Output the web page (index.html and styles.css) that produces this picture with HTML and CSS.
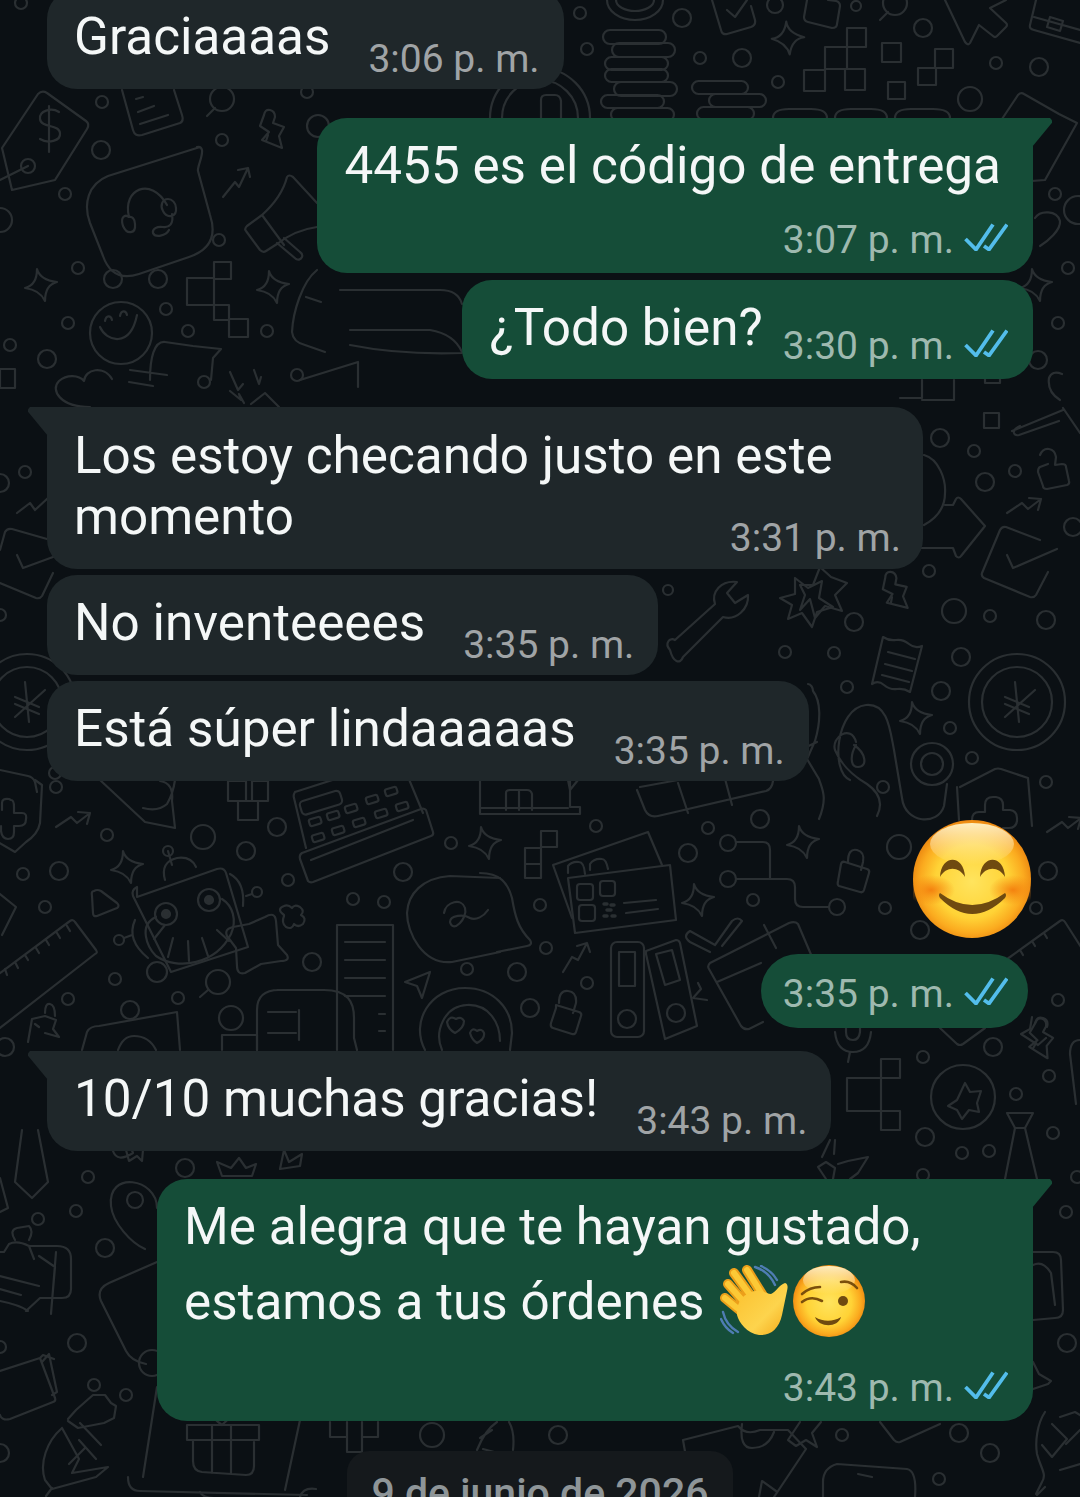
FILE: index.html
```html
<!doctype html>
<html lang="es">
<head>
<meta charset="utf-8">
<title>Chat</title>
<link rel="stylesheet" href="styles.css">
</head>
<body>
<svg width="0" height="0" class="defs">
	<defs>
		<symbol id="checks" viewBox="0 0 44 28"><path d="M1.5 16 12 26.5 29 1.5M20 23l5 3.5L43 1.5"/></symbol>
		<path id="spark" d="M-4-16Q-1-5 16-3 4 0 4 16 -1 5-16 3-4 0-4-16Z"/>
		<g id="plug"><path d="M-4-20q1-6 6-5t5 7l-2 6 11 4-5 9 3 12-20-8 7-8-9-6z"/><path d="M0 0l-2 6"/></g>
		<path id="trend" d="M0 14 15 4l6 6L34 0M22-1l12 1-3 11"/>
		<radialGradient id="face" cx=".5" cy=".52" r=".52"><stop offset="0" stop-color="#ffe45e"/><stop offset=".6" stop-color="#ffd336"/><stop offset=".84" stop-color="#fbab1f"/><stop offset="1" stop-color="#ec8710"/></radialGradient>
		<radialGradient id="cheek"><stop offset="0" stop-color="#f4820f"/><stop offset="1" stop-color="#f58a12" stop-opacity="0"/></radialGradient>
		<linearGradient id="shine" x1="0" y1="0" x2="0" y2="1"><stop offset="0" stop-color="#fff3c8" stop-opacity=".95"/><stop offset="1" stop-color="#fff3c8" stop-opacity="0"/></linearGradient>
		<linearGradient id="palm" x1="0" y1="0" x2="1" y2="1"><stop offset="0" stop-color="#fbc02d"/><stop offset=".6" stop-color="#fdd44d"/><stop offset="1" stop-color="#f4a716"/></linearGradient>
	</defs>
</svg>

<!-- wallpaper doodles -->
<svg class="wall" width="1080" height="1497" viewBox="0 0 1080 1497">
	<g class="dots">
		<circle cx="21" cy="3" r="6"/><circle cx="102" cy="102" r="6"/><circle cx="101" cy="150" r="9"/><circle cx="65" cy="194" r="6"/><circle cx="0" cy="220" r="12"/><circle cx="222" cy="140" r="6"/><circle cx="219" cy="240" r="6"/><circle cx="78" cy="268" r="6"/><circle cx="113" cy="279" r="9"/><circle cx="158" cy="279" r="9"/><circle cx="166" cy="309" r="6"/><circle cx="68" cy="323" r="6"/><circle cx="188" cy="331" r="6"/><circle cx="267" cy="331" r="6"/><circle cx="10" cy="345" r="6"/><circle cx="47" cy="359" r="9"/><circle cx="204" cy="382" r="6"/><circle cx="297" cy="375" r="6"/><circle cx="318" cy="126" r="11"/><circle cx="307" cy="92" r="6"/>
		<circle cx="580" cy="13" r="6"/><circle cx="587" cy="49" r="6"/><circle cx="682" cy="18" r="9"/><circle cx="700" cy="58" r="6"/><circle cx="742" cy="58" r="9"/><circle cx="778" cy="82" r="6"/><circle cx="775" cy="5" r="8"/><circle cx="856" cy="6" r="5"/><circle cx="923" cy="28" r="9"/><circle cx="996" cy="63" r="6"/><circle cx="1039" cy="67" r="9"/><circle cx="970" cy="99" r="12"/>
		<circle cx="1055" cy="194" r="6"/><circle cx="1068" cy="268" r="6"/><circle cx="1058" cy="323" r="6"/><circle cx="1038" cy="360" r="9"/><circle cx="1078" cy="210" r="14"/>
		<circle cx="940" cy="438" r="9"/><circle cx="974" cy="451" r="6"/><circle cx="985" cy="482" r="9"/><circle cx="1015" cy="471" r="6"/><circle cx="1073" cy="527" r="9"/><circle cx="929" cy="571" r="6"/><circle cx="854" cy="622" r="9"/><circle cx="954" cy="611" r="12"/><circle cx="990" cy="616" r="6"/><circle cx="1046" cy="620" r="9"/><circle cx="834" cy="653" r="6"/><circle cx="961" cy="657" r="9"/><circle cx="941" cy="691" r="9"/><circle cx="847" cy="687" r="6"/><circle cx="950" cy="728" r="6"/><circle cx="972" cy="758" r="6"/><circle cx="1046" cy="782" r="6"/><circle cx="883" cy="787" r="6"/>
		<circle cx="25" cy="472" r="6"/><circle cx="0" cy="483" r="9"/><circle cx="0" cy="615" r="6"/><circle cx="55" cy="773" r="6"/><circle cx="56" cy="787" r="6"/>
		<circle cx="785" cy="652" r="6"/><circle cx="668" cy="590" r="5"/>
		<circle cx="107" cy="835" r="6"/><circle cx="203" cy="837" r="12"/><circle cx="277" cy="827" r="9"/><circle cx="246" cy="851" r="9"/><circle cx="59" cy="871" r="9"/><circle cx="23" cy="874" r="6"/><circle cx="45" cy="907" r="6"/><circle cx="288" cy="880" r="6"/><circle cx="403" cy="872" r="9"/><circle cx="451" cy="843" r="6"/><circle cx="353" cy="899" r="6"/><circle cx="384" cy="902" r="6"/><circle cx="312" cy="962" r="9"/><circle cx="467" cy="969" r="6"/><circle cx="115" cy="979" r="6"/><circle cx="68" cy="999" r="6"/><circle cx="178" cy="998" r="6"/><circle cx="130" cy="1010" r="9"/><circle cx="231" cy="1018" r="12"/><circle cx="5" cy="1047" r="9"/>
		<circle cx="596" cy="826" r="6"/><circle cx="540" cy="905" r="6"/><circle cx="546" cy="948" r="6"/><circle cx="517" cy="972" r="9"/><circle cx="587" cy="983" r="6"/><circle cx="530" cy="1008" r="9"/><circle cx="688" cy="853" r="9"/><circle cx="708" cy="828" r="6"/><circle cx="760" cy="819" r="9"/><circle cx="753" cy="900" r="6"/><circle cx="899" cy="847" r="12"/><circle cx="885" cy="908" r="6"/><circle cx="920" cy="930" r="9"/><circle cx="1048" cy="871" r="9"/><circle cx="1036" cy="908" r="6"/><circle cx="1058" cy="1000" r="6"/>
		<circle cx="923" cy="1057" r="6"/><circle cx="993" cy="1047" r="9"/><circle cx="1049" cy="1076" r="6"/><circle cx="1016" cy="1094" r="6"/><circle cx="925" cy="1137" r="9"/><circle cx="962" cy="1153" r="6"/><circle cx="989" cy="1151" r="6"/><circle cx="1053" cy="1133" r="6"/><circle cx="923" cy="1175" r="6"/><circle cx="1077" cy="1177" r="6"/>
		<circle cx="88" cy="1177" r="6"/><circle cx="76" cy="1211" r="6"/><circle cx="38" cy="1219" r="6"/><circle cx="185" cy="1168" r="9"/><circle cx="105" cy="1248" r="9"/><circle cx="77" cy="1343" r="9"/><circle cx="94" cy="1385" r="6"/><circle cx="126" cy="1395" r="6"/><circle cx="0" cy="1453" r="9"/><circle cx="0" cy="1347" r="6"/>
		<circle cx="1066" cy="1212" r="6"/><circle cx="1067" cy="1343" r="9"/><circle cx="959" cy="1433" r="9"/><circle cx="990" cy="1453" r="9"/><circle cx="842" cy="1435" r="6"/><circle cx="939" cy="1479" r="6"/><circle cx="432" cy="1435" r="12"/><circle cx="558" cy="1435" r="9"/>
	</g>

	<!-- top right -->
	<rect x="603" y="30" width="63" height="14" rx="7"/><rect x="612" y="43" width="63" height="14" rx="7"/><rect x="605" y="57" width="63" height="13" rx="6.5"/><rect x="605" y="69" width="63" height="13" rx="6.5"/><rect x="614" y="82" width="63" height="14" rx="7"/><rect x="601" y="95" width="63" height="13" rx="6.5"/><rect x="611" y="108" width="63" height="13" rx="6.5"/>
	<rect x="692" y="81" width="56" height="13" rx="6.5"/><rect x="709" y="94" width="57" height="13" rx="6.5"/><rect x="697" y="107" width="57" height="13" rx="6.5"/>
	<circle cx="540" cy="118" r="50"/><circle cx="540" cy="118" r="38"/>
	<path d="M607 0a28 20 0 0 0 56 0M616 0a19 11 0 0 0 38 0M541 118V100q0-5 5-5h9q5 0 6 6v18"/>
	<path d="M712 0l9 30q1 5 6 4l24-7q5-2 4-7l-4-14M727 10l8 7 12-17"/>
	<path d="M807 0l-3 17q0 4 4 5l24 6q5 0 5-4l3-18q0-4-4-5l-8-1"/>
	<use href="#spark" x="788" y="38" transform="rotate(8 788 38)"/>
	<path d="M847 47V28h19v19zM825 69V47h22v22zM804 91V70h21v21zM845 90V69h20v21z"/>
	<rect x="882" y="43" width="19" height="19"/><rect x="935" y="49" width="18" height="19"/><rect x="918" y="68" width="18" height="17"/><rect x="888" y="82" width="17" height="17"/>
	<path d="M880 20l8-8"/><circle cx="895" cy="3" r="12"/>
	<path d="M945 0l20 42q3 4 5 1l9-18 14 11q2 2 4 0l9-9q2-2 0-4l-16-15 16-8"/>
	<path d="M1036 0l-6 25q-1 4 4 5l46 13M1034 17l46 13M1050 17l13 4-3 10-13-4z"/>
	<path d="M1000 122l18-27q3-3 6-1l35 20 18 9-32 57-40 3-5-61"/>
	<path d="M1035 218c5-8 22-8 25 3 1 9-12 20-20 25"/>
	<path d="M773 118q0-9 16-9h22q16 0 16 9M835 118q0-9 16-9h20q16 0 16 9M895 118q0-9 16-9h22q17 0 17 9"/>
	<use href="#spark" x="1036" y="285"/>

	<!-- left column -->
	<path d="M2 148l36-54q4-4 9-1l39 28q4 3 1 8l-32 51-43 10z"/><circle cx="28" cy="166" r="7"/><path d="M0 180l28-14"/>
	<path d="M59 112c-8-5-20-1-19 7 1 9 19 5 20 14 1 8-12 11-20 6M49 106v46"/>
	<path d="M122 90l11 40q2 7 9 5l38-12q4-2 2-8l-8-25M136 99l7-2M138 112l16-6M140 124l28-9"/>
	<circle cx="222" cy="99" r="12"/><path d="M207 116l8-8"/>
	<use href="#plug" x="268" y="135"/>
	<path d="M200 147l-92 29c-20 8-25 28-18 47l13 33c6 17 18 24 36 18l50-17c24-8 27-24 21-42l-12-44c-1-4 5-14 4-21q-1-4-5-3z"/>
	<path d="M129 217c-7-28 22-41 38-12M129 217c-4-3-9 0-6 9 4 9 13 8 12-2 0-5-3-8-6-7zM168 199c-6 0-8 7-5 12 4 8 14 6 13-3 0-5-4-9-8-9zM172 214c2 10-3 14-9 13-6-1-11 2-10 6 2 5 13 3 16-3"/>
	<path d="M223 197l12-15 4 5 9-19M238 170l10-2 2 9"/>
	<path d="M317 203l-24-26q-4-3-6 0-5 20-25 38l-15 11q-3 3-1 5l14 19q3 3 6 1l11-7q18-14 40-17M262 215l22 30M277 243l19 16q4 2 6-2 1-3-2-5l-16-14"/>
	<use href="#spark" x="41" y="285"/>
	<use href="#spark" x="273" y="287"/>
	<path d="M214 262h17v17h-17zM187 278h27v27h-27zM214 305h15v15h-15zM229 319h19v18h-19z"/>
	<circle cx="121" cy="333" r="31"/><path d="M100 327c6 14 30 22 37-12M105 321c1-6 6-6 7-1M120 316c1-6 6-6 7-1"/>
	<path d="M150 380c0-22 4-39 15-38l28 4 28 3-8 9-2 22M130 370l37 5M129 382l24 4"/>
	<path d="M90 407c-30 0-40-17-31-26 8-7 20-6 25 0 1-12 20-16 28-2"/>
	<path d="M317 270c-15 12-24 42-25 62q1 10 13 13l20 7M306 297l15 5"/>
	<path d="M230 372l8 18 5-6M254 370l5 14 2-7M230 391l11 9-2-6 5 9M251 404l14-11 14 14"/>
	<rect x="0" y="369" width="15" height="19"/>
	<path d="M300 380l58-18v25"/>
	<path d="M340 290h100q18 0 22 14M350 330h80q24 4 32 22M350 345q50 10 112 8"/>

	<!-- right column -->
	<path d="M900 398h22v-18M922 400h32v-20M985 375h15v8h-15z"/><rect x="984" y="413" width="15" height="15"/>
	<path d="M1012 431l51-21M1020 426q-7 3-6 7 1 3 5 2l40-14M1063 408l17 25M1060 400q-13-8-11-22 3-8 13-4"/>
	<path d="M1040 455q3-7 9-6t7 8l-1 8 7-1q4 0 4 3l3 14q1 3-2 4l-20 4q-4 0-4-3l-5-14q0-4 2-5l8-3"/>
	<path d="M924 455c15 4 22 25 21 38 0 14-8 25-21 32M945 505h8l3-6q2-3 5 0l24 27-24 30q-2 3-5 0l-3-8h-32"/>
	<use href="#trend" x="1007" y="499"/>
	<path d="M1040 540l-34-13q-4-1-6 3l-18 43q-1 3 2 5l46 19q4 1 6-2l12-23M1007 555l6 13 44-19"/>
	<path d="M0 550l5-18q2-4 7-3l35 10M0 583l36 15q4 1 6-2l11-23M17 555l6 13 30-11M17 513l13-10 5 7 13-12"/>
	<g transform="translate(1017 702)"><circle r="48"/><circle r="35"/><path d="M-2-20 2 20M-12 15 18-12M-12-5 12 5M-12 2 12 12"/></g>
	<g transform="translate(27 702)"><circle r="48"/><circle r="35"/><path d="M-2-20 2 20M-12 15 18-12M-12-5 12 5M-12 2 12 12"/></g>
	<path d="M800 610l5 -15-5-10 13 0 7-18 11 10 16 6-12 12 7 16-17-5-10 12-5-19-10 11"/>
	<use href="#plug" transform="translate(892 597) rotate(-8)"/>
	<path d="M883 637q6 4 13 3t13 4 13 2l-12 46q-6-4-13-3t-13-4-12-1zM888 652l27 7M885 664l27 7M882 675l27 7"/>
	<use href="#spark" x="916" y="718"/>
	<path d="M850 780c-20-8-14-72 16-75 22-2 24 25 28 45l8 48c3 26 36 28 42 8l3-22M856 742c-5-18-25-5-21 8 6 14 15 24 32 34 13 9 16 20 10 32M854 745c12 8 14 22 4 22-8 0-8-12-2-22"/>
	<circle cx="932" cy="764" r="21"/><circle cx="932" cy="764" r="11"/>
	<path d="M960 787l35-18q3-1 6 0l27 9 4 48M957 787l2 33"/>
	<path d="M985 812v-7q0-8 8-8h3q7 1 7 8v5h7q7 1 7 8v3q-1 7-8 7h-6M985 812h-6q-7 0-7 8v3q0 4 4 6"/>
	<use href="#trend" x="1047" y="818"/>
	<path d="M0 770l28 6q5 1 7 6l2 10"/>
	<path d="M808 684c3 0 5 4 5 7 8 10 8 30 2 50l-8 18 12 20c3 10 9 18 0 40M800 750l17-8"/>
	<path d="M670 650c-6-7 0-13 5-10l40-36c-4-12 6-24 22-22l-10 11 8 10 13-8c1 14-12 26-25 22l-40 40c-3 8-10 5-13-7z"/>
	<path d="M780 598l12 7-4 14 14-6 10 14 5-15 16-5-14-9 3-17-14 7-13-10 0 16z"/>

	<!-- middle -->
	<path d="M35 780l7 5-2 38q-2 11-14 19l-11 10-17-10"/><path d="M2 810v-7q0-5 7-4l2 1q3 0 3 7v6h8q5 0 4 6 0 7-7 7h-5v6q0 7-6 7t-7-8v-5"/>
	<use href="#trend" x="56" y="813"/>
	<path d="M100 780l45 42 30 6-3-27q2-18-12-20M175 780q-2 14-8 24-9 8-24 4"/><path d="M228 781h18v20h-18zM252 781h16v20h-16zM238 801h20v19h-20z"/>
	<use href="#spark" x="127" y="867"/>
	<use href="#spark" x="485" y="843"/>
	<path d="M94 891q-3 0-2 5l1 17q0 4 4 3l20-8q3-2 0-5l-16-12q-4-2-7 0z"/>
	<path d="M0 894l16 13-4 8-10 20"/>
	<path d="M0 973l70-52q3-2 5 1l21 28q2 3-1 4l-95 74M5 969l2 6M15 962l3 6M25 955l3 5M36 948l3 5M46 940l3 5M57 933l3 5M67 926l3 5"/>
	<path d="M135 897l80-28q7-2 9 4l22 74-77 25-38-76q-2-6 4-9z" transform="translate(2 0)"/>
	<circle cx="166" cy="914" r="11"/><circle cx="209" cy="900" r="11"/><circle cx="166" cy="914" r="4" class="fill"/><circle cx="209" cy="900" r="4" class="fill"/>
	<path d="M156 917c-18 8-9 30 0 39 22 15 60 8 75-22 6-14 2-28-9-35"/><path d="M165 925l-11 14M173 938l-5 19M188 941l1 20M202 938l6 18M217 930l12 11"/>
	<path d="M165 880q-5-18 12-22 14-2 19 9M168 851l4 14M230 874q15 8 13 32M246 896l6-2"/><circle cx="168" cy="851" r="5"/><circle cx="257" cy="892" r="5"/><circle cx="119" cy="940" r="5"/><path d="M124 938l8-3M135 920q-9 20 13 38"/>
	<path d="M265 917q10-6 11 4l2 24 9 10q3 6-6 6l-20 3-16 9q-8 2-8-7l-1-18-9-12q-3-7 6-9l16-3z"/>
	<circle cx="157" cy="972" r="10"/><path d="M284 915q-8-6 0-9 4-2 8 2 2-4 8-1 5 4 1 8 6 3 2 9-5 4-9 0-2 6-8 3-5-4-2-11z"/>
	<circle cx="218" cy="982" r="12"/><path d="M200 997l8-7"/>
	<path d="M295 792l100-32 6 0 22 53M295 792q-2 3-1 6l12 50"/>
	<path d="M302 853l119-44q3-1 5 1l7 22q1 3-2 4l-118 46q-3 1-5-1l-8-22q-1-4 2-6zM311 860l102-40"/>
	<rect x="300" y="796" width="42" height="14" rx="4" transform="rotate(-17 320 803)"/>
	<rect x="309" y="818" width="12" height="7" rx="2" transform="rotate(-17 315 821)"/><rect x="327" y="812" width="12" height="7" rx="2" transform="rotate(-17 333 815)"/><rect x="345" y="805" width="12" height="7" rx="2" transform="rotate(-17 351 808)"/><rect x="366" y="796" width="12" height="7" rx="2" transform="rotate(-17 372 799)"/><rect x="385" y="788" width="12" height="7" rx="2" transform="rotate(-17 391 791)"/>
	<rect x="312" y="834" width="12" height="7" rx="2" transform="rotate(-17 318 837)"/><rect x="332" y="827" width="12" height="7" rx="2" transform="rotate(-17 338 830)"/><rect x="353" y="819" width="12" height="7" rx="2" transform="rotate(-17 359 822)"/><rect x="375" y="810" width="12" height="7" rx="2" transform="rotate(-17 381 813)"/><rect x="396" y="803" width="12" height="7" rx="2" transform="rotate(-17 402 806)"/>
	<path d="M500 878l-50 -2c-28 2-42 18-43 37 0 20 16 52 45 49l48-10M444 913c2-12 18-15 21-5 3 10-12 26-15 14 0-7 14-8 20-4 6 3 14-2 18-8"/>
	<path d="M480 873c20 0 28 10 32 25 3 18 6 30 18 42q3 5-3 6l-30 6"/>
	<path d="M480 780l0 34h100v-7h-10v-27M480 808h88M506 810v-17q0-3 4-3h17q4 0 5 4v16M519 790v20M568 780l2 10 8-10"/>
	<path d="M637 790l8 20q4 8 13 6l108-25q6-2 7-10M640 787l60-11M678 783l10 30M724 775l8 30"/>
	<path d="M553 865l95-33 14 33M553 865l19 53"/>
	<path d="M568 878l102-13 6 55-101 13z"/>
	<rect x="577" y="884" width="16" height="16" rx="3"/><rect x="600" y="881" width="15" height="15" rx="3"/><rect x="579" y="905" width="16" height="16" rx="3"/>
	<path d="M568 873v-7q4-5 11-4 5 0 6 12M590 870l0-6q4-6 12-5 4 0 6 10M624 903l32-3M626 913l32-4"/>
	<path d="M604 904h3M611 905h3M607 910h4M604 916h3M612 916h3" class="thick"/>
	<path d="M525 848h16v16h-16zM525 864h16v14h-16zM541 831h16v16h-16z"/>
	<rect x="611" y="942" width="33" height="95" rx="6"/><rect x="619" y="952" width="16" height="34"/><circle cx="627" cy="1019" r="9"/>
	<path d="M646 951l30-11q3 0 4 3l17 83-32 13-19-85z"/><path d="M656 954l16-4 8 30-15 5z"/><circle cx="676" cy="1013" r="9"/>
	<path d="M556 1005l23 7q3 1 2 4l-5 16q-1 3-4 2l-19-6q-3-1-2-5l5-15q0-3 0-3zM559 1003q0-13 9-12t8 12l-3 10"/>
	<path d="M563 972l9-15 6 3 9-17M577 946l10-3 3 9"/>
	<circle cx="728" cy="843" r="8"/><circle cx="728" cy="879" r="8"/><circle cx="837" cy="907" r="8"/>
	<path d="M736 842h27q7 0 7 8v28M736 879h51q8 0 8 8v12q0 8 8 8h26"/>
	<use href="#spark" x="698" y="900"/>
	<use href="#spark" x="803" y="842"/>
	<path d="M838 881l3-17q1-3 4-2l22 7q3 1 2 4l-5 17q-1 3-4 2l-21-6q-2-1-1-5zM848 862q0-14 9-12 8 2 6 12l-2 8"/>
	<path d="M710 963l79-40q6-2 9 1l40 94M710 963q-3 3-1 6l32 57q3 4 8 3l14-7M717 982l44-19M764 925l12 23"/>
	<path d="M710 952l-20-10q-8-6 0-11l25 14 17-24q6-5 10 0l-20 25M707 1000l-14 -2 8-9-3-6"/>
	<path d="M1010 957l50-36q3-2 5 1l16 25M1020 950l3 5M1032 941l3 5M1044 933l3 5M1010 957l-30 21"/>
	<path d="M1032 1017l-2 12-9 5 17 11 8-7M1035 1023q2-7 8-5 6 2 4 9"/>
	<path d="M28 1042l4-23 13-3 11 4-3 9 6 8-14-4M45 1013q0-10 5-9t5 12M35 1024l4 3"/>
	<path d="M337 1050V925h56v125M345 942h40M345 960h40M345 978h40M345 996h40M385 1014h-6M385 1031h-6"/>
	<path d="M257 1050v-40q0-20 22-20h45c24 0 30 12 30 28v20l3 12M299 990q-10 0-22 0M268 1012h28M268 1033h28M299 1010v30"/>
	<path d="M405 982l25-10-8 26-5-12z"/>
	<path d="M425 1050c-15-28 5-62 40-62 28 0 47 20 47 45l-2 17M442 1050c-8-18 2-44 25-45 22-1 33 18 33 36"/><path d="M447 1022q3-7 9-3 5-3 8 2 0 7-9 12-7-4-8-11zM470 1033q2-6 7-2 5-3 7 2 1 6-7 10-5-3-7-10z"/>
	<path d="M82 1050l5-18q3-6 12-6l78-14 3 38M118 1050q5-14 16-14 15 0 22 14"/>
	<path d="M222 1050v-15h35v15"/>
	<path d="M835 1032q2 20 18 20 16 0 18-20M850 1052l-2 10M846 1028v4q0 8 7 8 6 0 7-8v-4"/>
	<path d="M881 1059h19v19h-19zM847 1078h34v33h-34zM881 1111h19v19h-19z"/>
	<circle cx="963" cy="1097" r="32"/><path d="M965 1083l5 9 11-1-4 12 2 9-10-2-7 9-5-9-9-4 9-6z"/>
	<path d="M1007 1113h26l-8 15h-10zM1015 1128l-10 51M1025 1128l12 51"/>
	<path d="M940 1028l17 16q3 2 6 0l22-16"/>
	<use href="#plug" transform="translate(1036 1043) rotate(10)"/>
	<path d="M1080 1040q-10 0-10 14l6 50"/>
	<path d="M830 1140l-8 17M838 1164l10-3 20-4-10 16-8 6M826 1179l-8-12 8-5 9 6-2 11M835 1140l-1 14"/>

	<!-- bottom left -->
	<path d="M22 1130l-7 52 17 16 16-16-10-52M0 1178l8 30-8 4"/>
	<path d="M113 1151q4 12 20 2l-2-5M126 1150l3 11 8-5 5 5 1-11"/>
	<path d="M217 1162l5 14h30l4-12-10 4-7-10-8 10z"/>
	<path d="M284 1150l5 12 13-8-2 12-20 3z"/>
	<path d="M157 1208c0-30-50-38-46-2 2 17 20 37 34 43"/><circle cx="135" cy="1200" r="8"/>
	<path d="M15 1240q-6-10 2-12l12-2q5 5 0 14M29 1246l5 13M0 1252h4l5-8q8-4 20 2h28q14 0 14 13v30q0 9-9 9h-22l-14 13H28q-8-6-28-10M0 1276l39 10M0 1289l21 6M56 1252l-5 62M39 1256l16 11-4 46"/>
	<path d="M0 1371l40-13 15 40q1 3-2 4l-43 17q-8 2-10-4M40 1358l3-3 11 4M42 1362l7-8 8 38-5 3"/>
	<path d="M157 1262l-48 21q-13 6-8 18l25 50q5 10 20 13"/><circle cx="152" cy="1363" r="13"/>
	<path d="M62 1428c-15 13-23 35-17 52l7 9 44-12 12-10-36 6 7-14-17-31M68 1421l10 7 26-5 10-5 2-12-5-3-6-8-12 0-8 7-9 8-8 9M52 1488l-6 8M69 1464l16-16M96 1459l-17-19M80 1423l21 22"/>
	<path d="M157 1387l-14 90M128 1477q0 14 12 14l167 4M285 1490l15-70M200 1492q3 6 14 6h20"/>
	<rect x="187" y="1425" width="72" height="15"/><path d="M193 1441v20q0 10 9 11l44 3q8 0 8-9v-24M212 1425v48M231 1425v49M222 1425q-12-8-9-15M222 1425q9-8 15-15"/>

	<!-- bottom right -->
	<path d="M1033 1252h20q8 0 8 8l2 50q0 8-8 8l-22 2M1033 1265q10-5 18 8l4 32"/>
	<path d="M1033 1362l6 12 12 7-3 3-15 5"/>
	<path d="M1045 1412c-8 12-10 30-8 42 4 15 10 20 5 28l-6 12M1052 1424l15 15-15 18-10-12M1060 1417l15-5 5 3M1080 1430l-14 14M1060 1470l20-6M1045 1487l-8 8"/>
	<path d="M823 1497v-15q0-14 14-18l70 5q10 2 8 28M858 1474l14 3"/>
	<path d="M683 1440l55-14q8 10 22 4l28 0 18 19-32 48M683 1440l10 57M742 1424q-3 24 10 24 16 0 22-16M759 1497l3-16 14 10"/>
	<path d="M800 1422l-12 18 8 6 10-6 11 7-5-14 9-11M880 1422l14 18q3 3 6 2l40-18"/>
	<path d="M330 1422v15h17v15h15v-15h16v-15M347 1422v15M362 1422v15"/>
	<path d="M477 1450q8-20 20-28M513 1450q2-18-4-28M480 1438l12-8M483 1449l15 4"/>
	<path d="M300 1497q3-10 16-8"/>
</svg>

<main class="chat">
	<div class="msg in"><p class="text">Graciaaaas</p><span class="time">3:06 p. m.</span></div>

	<div class="msg out tail stack gap-29">
		<p class="text">4455 es el código de entrega</p>
		<div class="meta"><span class="time">3:07 p. m.</span><svg class="check"><use href="#checks"/></svg></div>
	</div>
	<div class="msg out gap-7">
		<p class="text">¿Todo bien?</p>
		<div class="meta"><span class="time">3:30 p. m.</span><svg class="check"><use href="#checks"/></svg></div>
	</div>

	<div class="msg in tail stack wide two gap-28">
		<p class="text">Los estoy checando justo en este<br>momento</p><span class="time">3:31 p. m.</span>
	</div>
	<div class="msg in gap-6"><p class="text">No inventeeees</p><span class="time">3:35 p. m.</span></div>
	<div class="msg in gap-6"><p class="text">Está súper lindaaaaas</p><span class="time">3:35 p. m.</span></div>

	<svg class="big-emoji" viewBox="0 0 118 118">
		<circle cx="59" cy="59" r="59" fill="url(#face)"/>
		<ellipse cx="59" cy="24" rx="42" ry="21" fill="url(#shine)"/>
		<ellipse cx="18" cy="70" rx="24" ry="15" fill="url(#cheek)"/><ellipse cx="100" cy="70" rx="24" ry="15" fill="url(#cheek)"/>
		<path d="M27 57c1-23 24-23 25 0-6-11-19-11-25 0zM67 57c1-23 24-23 25 0-6-11-19-11-25 0z" fill="#6f4a10"/>
		<path d="M27 73Q59 97 92 73 94 75 92 78 59 110 27 78 25 75 27 73Z" fill="#6f4a10"/>
	</svg>
	<div class="msg out pill">
		<div class="meta"><span class="time">3:35 p. m.</span><svg class="check"><use href="#checks"/></svg></div>
	</div>

	<div class="msg in tail gap-23"><p class="text">10/10 muchas gracias!</p><span class="time">3:43 p. m.</span></div>

	<div class="msg out tail stack wide long">
		<p class="text">Me alegra que te hayan gustado,<br>estamos a tus órdenes <svg class="emoji wave" viewBox="0 0 72 72">
			<path d="M35 2c9 3 16 9 20 18M41 1c7 3 12 7 16 14M3 47c2 9 8 16 15 20M1 54c3 7 7 11 12 14" fill="none" stroke="#4f7db3" stroke-width="2.4" stroke-linecap="round"/>
			<g fill="none" stroke="#ec9f1a" stroke-width="10" stroke-linecap="round"><path d="M14 8 36 38M27 5 45 34M8 19 30 44M5 33 28 52"/></g>
			<g fill="none" stroke="#fcc936" stroke-width="6" stroke-linecap="round"><path d="M14 8 36 38M27 5 45 34M8 19 30 44M5 33 28 52"/></g>
			<path d="M65 18c3 1 3 4 2 8l-5 24c-3 14-12 21-23 20-12-2-20-12-22-20-1-12 6-22 18-24 7-1 12 3 16 3 5-2 8-9 14-11z" fill="url(#palm)"/>
		</svg><svg class="emoji wink" viewBox="0 0 72 72">
			<circle cx="36" cy="36" r="36" fill="url(#face)"/>
			<ellipse cx="36" cy="15" rx="26" ry="14" fill="url(#shine)"/>
			<path d="M9 29q8-7 18-7M48 17q9-2 16 6M9 37q9-7 20-1" fill="none" stroke="#7a4f0c" stroke-width="2.6" stroke-linecap="round"/>
			<circle cx="50" cy="36" r="5" fill="#6f4a10"/>
			<path d="M22 52c8 5 18 5 26 0-3 11-22 11-26 0z" fill="#6f4a10"/>
		</svg></p>
		<div class="meta"><span class="time">3:43 p. m.</span><svg class="check"><use href="#checks"/></svg></div>
	</div>

	<div class="date">9 de junio de 2026</div>
</main>
</body>
</html>
```

FILE: styles.css
```css
html, body {
  margin: 0;
  height: 1497px;
  overflow: hidden;
  background: #0b1014;
  font-family: Roboto, "Liberation Sans", sans-serif;
}
.defs {
  position: absolute;
}
.wall {
  position: absolute;
  left: 0;
  top: 0;
  fill: none;
  stroke: #2a2f32;
  stroke-width: 2.2;
  stroke-linecap: round;
  stroke-linejoin: round;
}
.wall .fill {
  fill: #2a2f32;
}
.wall .thick {
  stroke-width: 3.5;
}

.chat {
  position: relative;
  display: flex;
  flex-direction: column;
  padding: 0 47px;
  margin-top: -11px;
}

.msg {
  position: relative;
  display: flex;
  align-items: flex-end;
  box-sizing: border-box;
  border-radius: 30px;
}
.in {
  align-self: flex-start;
  gap: 38px;
  padding: 17px 24px 15px 27px;
  background: #1f272a;
}
.out {
  align-self: flex-end;
  gap: 20px;
  padding: 17px 25px 18px 27px;
  background: #154d38;
}
.text {
  margin: 0 0 7px;
  font-size: 51.25px;
  line-height: 61px;
  color: #f4f7f7;
}
.out .text {
  margin-bottom: 3px;
}
.time {
  font-size: 39px;
  line-height: 30px;
  white-space: nowrap;
}
.in .time {
  color: #a0a4a6;
}
.out .time {
  color: #9eb9af;
}
.meta {
  display: flex;
  align-items: flex-end;
  gap: 10px;
}
.check {
  width: 44px;
  height: 28px;
  fill: none;
  stroke: #53bdeb;
  stroke-width: 3.8;
  margin-bottom: 4px;
}

/* tails */
.tail.out {
  border-top-right-radius: 0;
}
.tail.in {
  border-top-left-radius: 0;
}
.tail::before {
  content: "";
  position: absolute;
  top: 0;
  width: 20px;
  height: 29px;
}
.tail.out::before {
  right: -19px;
  background: #154d38;
  clip-path: polygon(0 0, 90% 0, 100% 8%, 100% 16%, 0 100%);
}
.tail.in::before {
  left: -19px;
  background: #1f272a;
  clip-path: polygon(100% 0, 10% 0, 0 8%, 0 16%, 100% 100%);
}

.stack {
  flex-direction: column;
  align-items: flex-start;
  gap: 0;
}
.stack .meta,
.stack .time {
  align-self: flex-end;
}
.out.stack {
  padding: 17px 32px 18px 27px;
}
.out.stack .text {
  margin-bottom: 27px;
}
.out.stack .meta {
  margin-right: -7px;
}
.wide {
  width: 876px;
}

/* two line message with the time on its last line */
.in.two {
  padding: 18px 22px 16px 27px;
}
.two .text {
  margin: 0;
}
.two .time {
  margin-top: -24px;
}

.out.long {
  padding: 10px 32px 18px 27px;
}
.out.long .text {
  line-height: 75px;
  margin-bottom: 32px;
}
.emoji {
  width: 72px;
  height: 72px;
  vertical-align: -18px;
}
.wave {
  margin: 0 1px 0 3px;
}

.big-emoji {
  align-self: flex-end;
  width: 118px;
  height: 118px;
  margin: 39px 2px 0 0;
}
.pill {
  margin: 16px 5px 0 0;
  padding: 23px 20px 19px 22px;
  border-radius: 37px;
}

.gap-29 { margin-top: 29px; }
.gap-28 { margin-top: 28px; }
.gap-23 { margin-top: 23px; }
.gap-7 { margin-top: 7px; }
.gap-6 { margin-top: 6px; }
.long { margin-top: 28px; }

.date {
  align-self: center;
  margin-top: 30px;
  padding: 18px 24px;
  border-radius: 22px;
  background: #15191c;
  color: #8e9598;
  font-size: 41px;
  font-weight: 500;
  line-height: 48px;
}
```
